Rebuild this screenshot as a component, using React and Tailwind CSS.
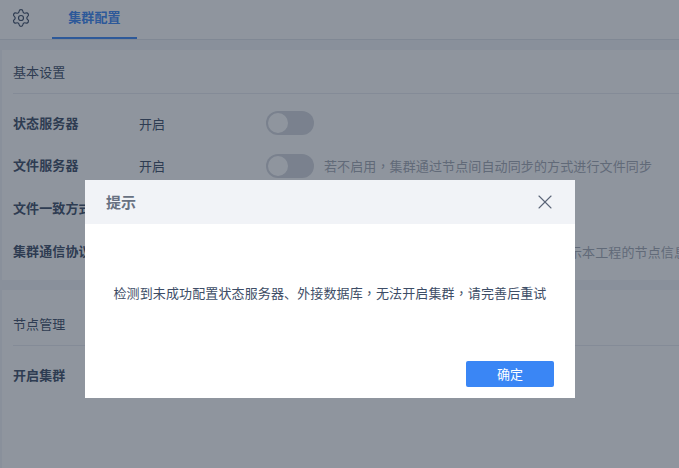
import React from "react";
import { Settings, X } from "lucide-react";

const font = { fontFamily: '"Noto Sans CJK SC", "Liberation Sans", sans-serif' };

function Comma() {
  return <span className="font-['Noto_Sans_CJK_TC']">，</span>;
}

function Toggle({ nudge }) {
  return (
    <div className={`w-12 h-6 rounded-full bg-[#d4d7de] flex items-center pl-[2px] shrink-0 ${nudge ? "mt-[2px]" : ""}`}>
      <div className="w-5 h-5 rounded-full bg-white" />
    </div>
  );
}

function Row({ label, value, desc, toggle, nudge, mb = "mb-[19px]" }) {
  return (
    <div className={`flex items-center h-6 ${mb} whitespace-nowrap`}>
      <div className="w-[126px] shrink-0 font-bold text-[#3d4d66]">{label}</div>
      <div className="w-[127px] shrink-0 text-[#3d4d66] pt-[2px]">{value}</div>
      {toggle && <Toggle nudge={nudge} />}
      {desc && <div className="ml-[10px] pt-[2px] text-[#a3a8b3]">{desc}</div>}
    </div>
  );
}

export default function App() {
  return (
    <div className="relative w-[679px] h-[468px] overflow-hidden bg-[#f3f5f8] text-[13px] leading-5 tracking-[0.12px]" style={font}>
      <div className="h-10 bg-white border-b border-[#e0e4ea] flex items-start pl-[11px]">
        <div className="h-[39px] flex items-center pb-[4px] w-[41px]">
          <Settings size={20} strokeWidth={1.4} className="text-[#3d4d66]" />
        </div>
        <div className="w-[85px] h-[39px] border-b-2 border-[#3a86f5] flex items-center justify-center pb-[3px] font-bold text-[#3a86f5]">
          集群配置
        </div>
      </div>

      <div className="ml-[2px] mt-[10px] h-[230px] bg-white pl-[11px]">
        <div className="h-[44px] border-b border-[#e8ebf0] flex items-center pt-[1px] text-[#3d4d66]">基本设置</div>
        <div className="pt-[17px]">
          <Row label="状态服务器" value="开启" toggle mb="mb-[18px]" />
          <Row
            label="文件服务器"
            value="开启"
            toggle
            nudge
            desc={<>若不启用<Comma />集群通过节点间自动同步的方式进行文件同步</>}
          />
          <Row label="文件一致方式" value="" />
          <div className="flex items-center h-6 whitespace-nowrap">
            <div className="w-[126px] shrink-0 font-bold text-[#3d4d66]">集群通信协议</div>
            <div className="ml-[220px] pt-[2px] text-[#a3a8b3]">用于集群中各节点的通信，此处仅显示本工程的节点信息</div>
          </div>
        </div>
      </div>

      <div className="ml-[2px] mt-[10px] h-[178px] bg-white pl-[11px]">
        <div className="h-[56px] border-b border-[#e8ebf0] flex items-center pt-[12px] text-[#3d4d66]">节点管理</div>
        <div className="pt-[17px]">
          <Row label="开启集群" value="" />
        </div>
      </div>

      <div className="absolute inset-0 bg-[rgba(31,43,61,0.5)]" />

      <div className="absolute left-[85px] top-[180px] w-[490px] h-[218px] bg-white flex flex-col">
        <div className="h-11 bg-[#f1f3f7] flex items-center justify-between pl-[21px] pr-[18px]">
          <span className="text-[15px] font-bold text-[#687182]">提示</span>
          <X size={24} strokeWidth={1.1} className="text-[#5b6578]" />
        </div>
        <div className="flex-1 flex items-center justify-center text-[#3d4d66] pt-[1px]">
          <span>检测到未成功配置状态服务器、外接数据库<Comma />无法开启集群<Comma />请完善后重试</span>
        </div>
        <div className="flex justify-end pr-[21px] pb-[11px]">
          <button className="w-[88px] h-[26px] rounded-[2px] bg-[#3a86f5] text-white text-[13px]">确定</button>
        </div>
      </div>
    </div>
  );
}
